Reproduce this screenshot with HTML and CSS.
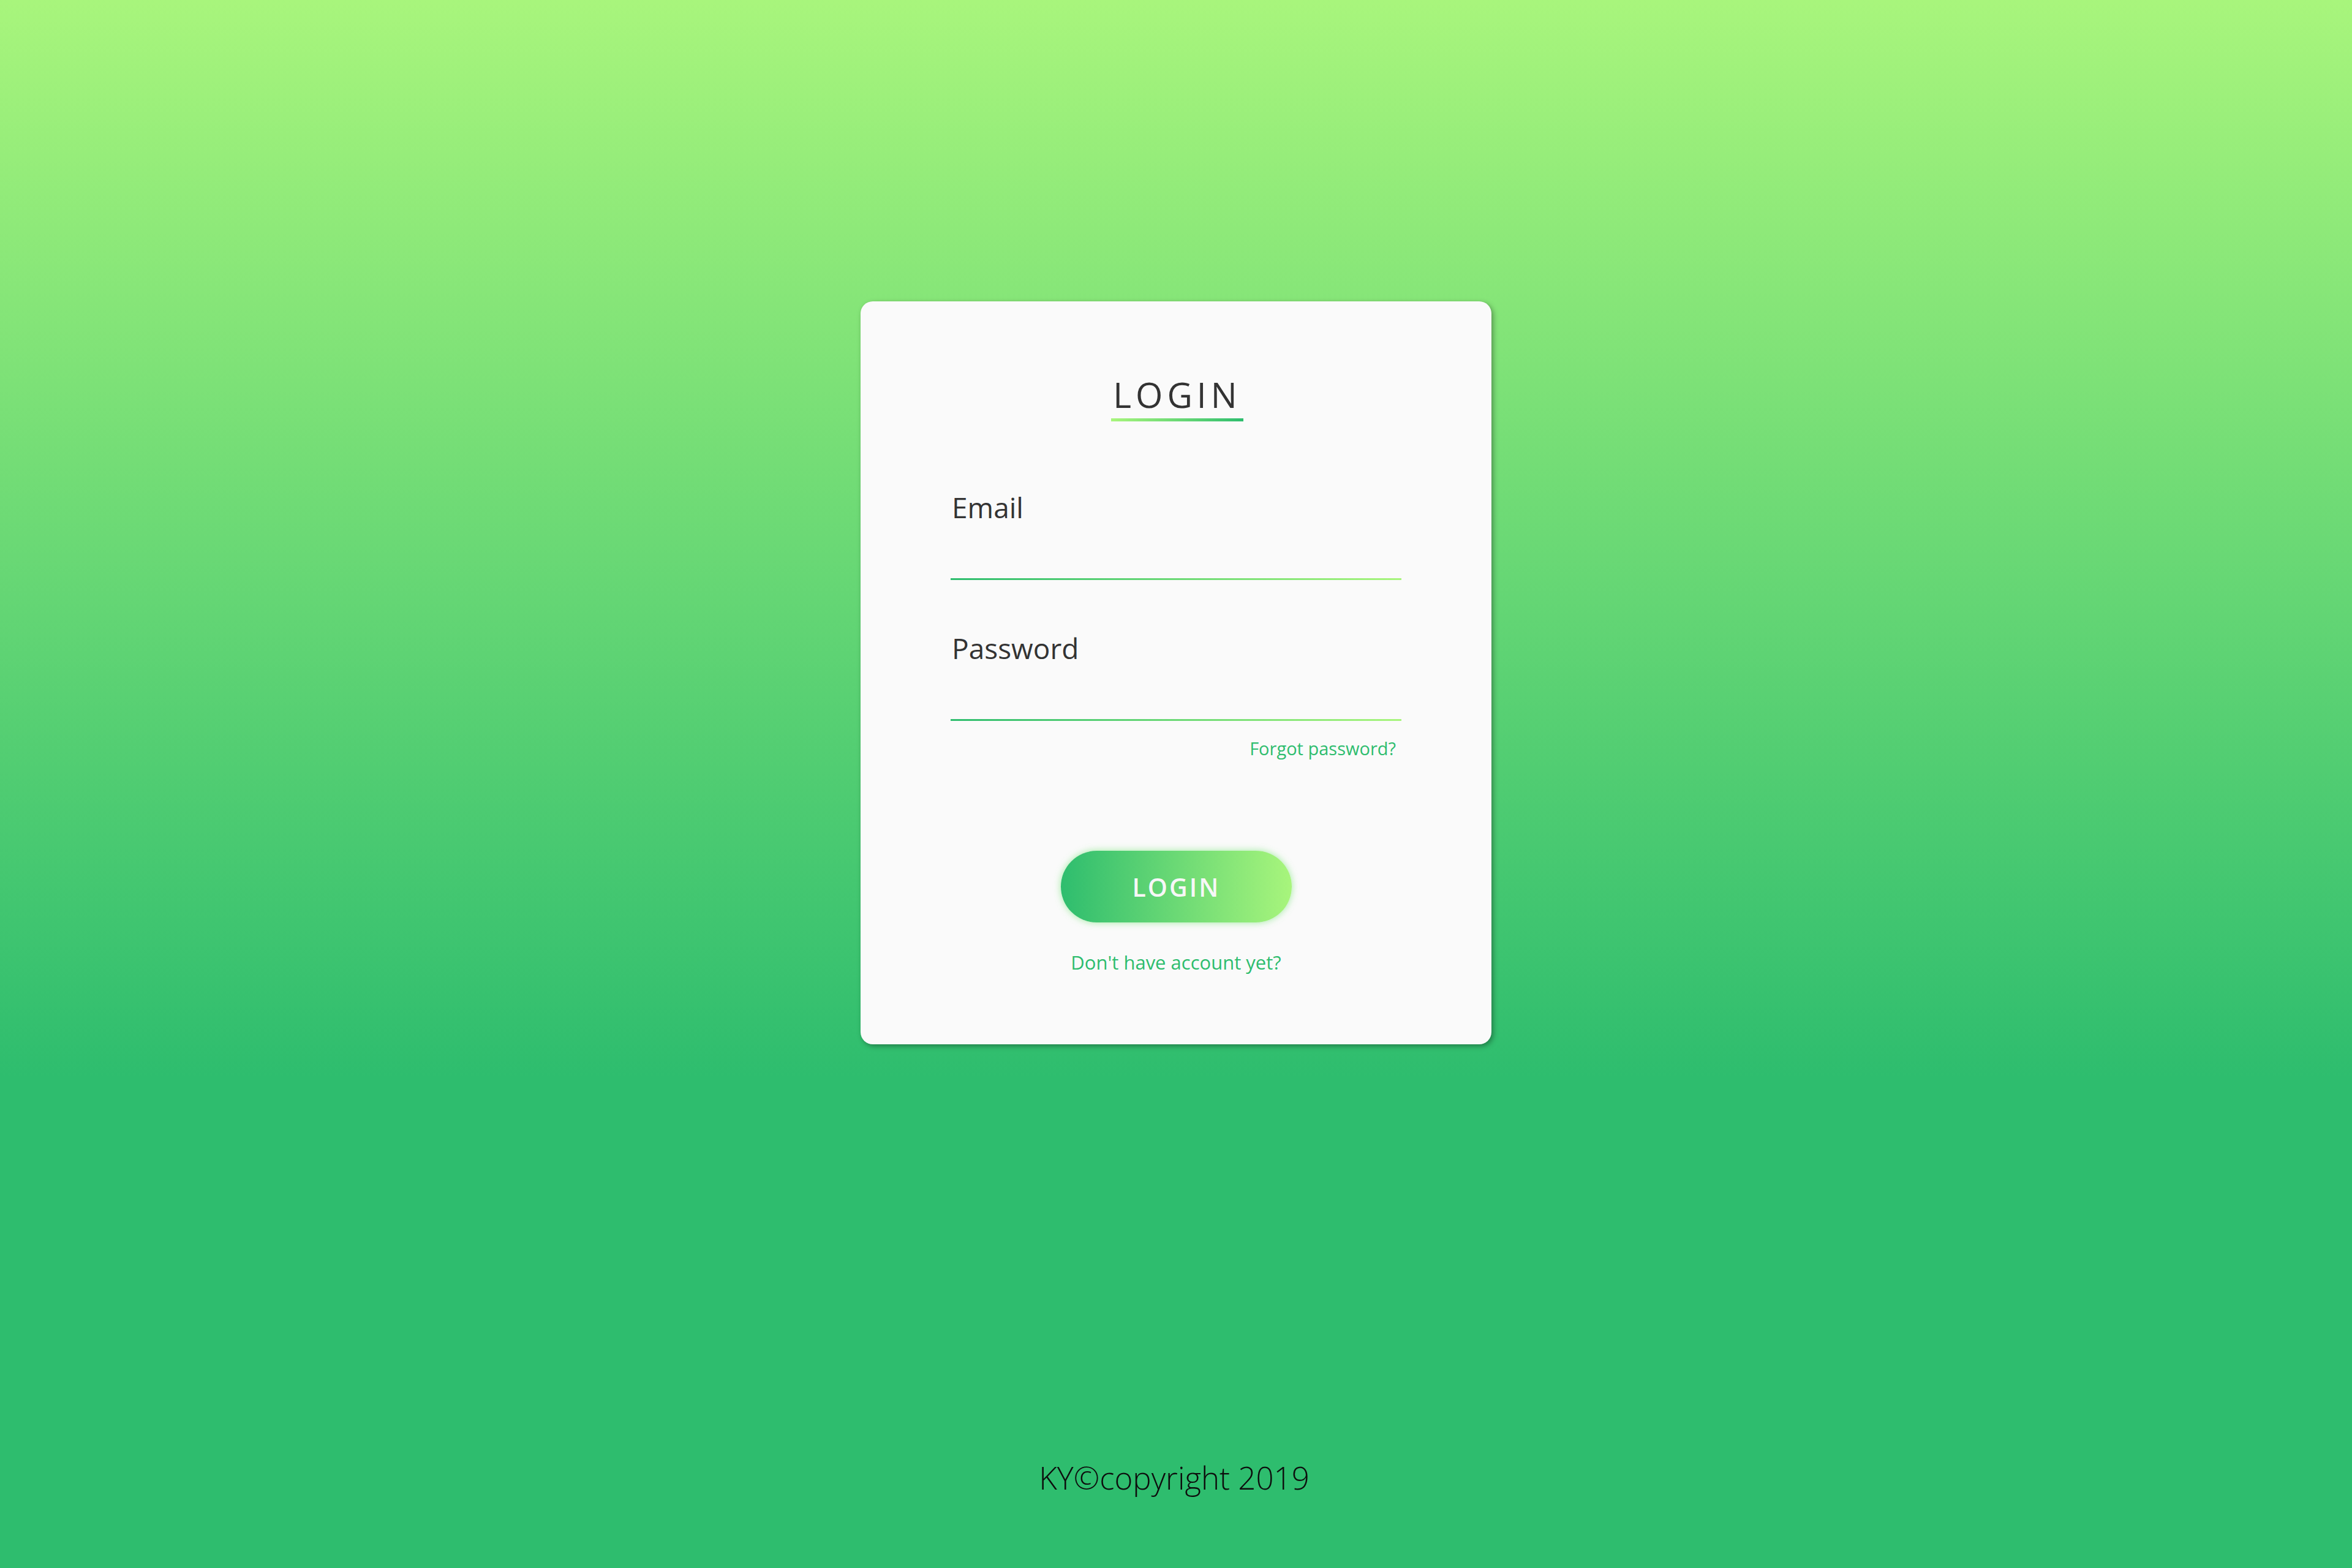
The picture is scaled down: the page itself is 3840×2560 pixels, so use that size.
FILE: index.html
```html
<!DOCTYPE html>
<html lang="en">
<head>
<meta charset="utf-8">
<title>Login</title>
<link rel="stylesheet" href="styles.css">
</head>
<body>
<main class="page">
  <form class="card" onsubmit="return false">
    <div class="title-wrap"><h1 class="title">LOGIN</h1></div>
    <div class="field">
      <label class="label" for="email">Email</label>
      <input class="input" id="email" type="email">
    </div>
    <div class="field field-second">
      <label class="label" for="password">Password</label>
      <input class="input" id="password" type="password">
    </div>
    <div class="forgot-row"><a class="link forgot" href="#">Forgot password?</a></div>
    <div class="btn-row"><button class="btn" type="submit">LOGIN</button></div>
    <div class="signup-row"><a class="link signup" href="#">Don't have account yet?</a></div>
  </form>
  <footer class="footer">KY©copyright 2019</footer>
</main>
</body>
</html>
```

FILE: styles.css
```css
html, body {
  margin: 0;
  padding: 0;
}
body {
  min-height: 100vh;
  background-color: #2ebd6e;
  background-image: linear-gradient(180deg, #a8f57c 0px, #2ebd6e 1760px);
  background-repeat: no-repeat;
  font-family: "Open Sans", "Noto Sans", sans-serif;
}
.page {
  display: flex;
  flex-direction: column;
  align-items: center;
  padding-top: 492px;
}
.card {
  box-sizing: border-box;
  width: 1030px;
  height: 1213px;
  background: #fafafa;
  border-radius: 20px;
  box-shadow: 3px 3px 9px rgba(0, 0, 0, 0.35);
  padding: 124px 147px 0;
  display: flex;
  flex-direction: column;
}
.title-wrap {
  display: flex;
  justify-content: center;
}
.title {
  position: relative;
  margin: 0;
  font-size: 57px;
  line-height: 57px;
  font-weight: 400;
  color: #333;
  letter-spacing: 7px;
  padding-left: 4px;
}
.title::after {
  content: "";
  position: absolute;
  left: 50%;
  bottom: -15px;
  width: 216px;
  height: 5px;
  margin-left: -106px;
  background: linear-gradient(90deg, #a8f57c, #2ebd6e);
}
.field {
  display: flex;
  flex-direction: column;
  margin-top: 132px;
}
.field-second {
  margin-top: 88px;
}
.label {
  font-size: 46px;
  line-height: 46px;
  color: #333;
  padding-left: 2px;
}
.input {
  box-sizing: border-box;
  width: 736px;
  height: 96px;
  border: 0;
  outline: none;
  background: linear-gradient(90deg, #2ebd6e, #a8f57c) no-repeat left bottom / 100% 3px;
  font-family: inherit;
  font-size: 40px;
  color: #333;
  padding: 0 4px;
}
.forgot-row {
  display: flex;
  justify-content: flex-end;
  margin-top: 30px;
  padding-right: 9px;
}
.link {
  color: #2ebd6e;
  text-decoration: none;
}
.forgot {
  font-size: 29px;
  line-height: 30px;
}
.btn-row {
  display: flex;
  justify-content: center;
  margin-top: 152px;
}
.btn {
  width: 377px;
  height: 117px;
  border: 0;
  border-radius: 59px;
  background: linear-gradient(90deg, #2ebd6e, #a8f57c);
  box-shadow: 0 0 12px rgba(120, 230, 120, 0.7);
  color: #f7f7f7;
  font-family: inherit;
  font-size: 41px;
  font-weight: 600;
  letter-spacing: 3px;
  padding: 0 0 0 1px;
  cursor: pointer;
}
.signup-row {
  display: flex;
  justify-content: center;
  margin-top: 50px;
}
.signup {
  font-size: 31px;
  line-height: 31px;
}
.footer {
  margin-top: 681px;
  padding-right: 6px;
  font-size: 51px;
  line-height: 52px;
  font-weight: 300;
  color: #0d0d0d;
}
```
